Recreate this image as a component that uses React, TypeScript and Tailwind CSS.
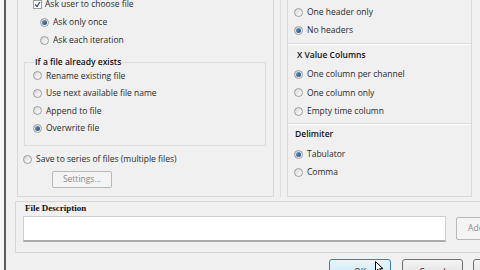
import React from "react";

function Radio({ checked }: { checked?: boolean }) {
  return (
    <span className="w-[9px] h-[9px] rounded-full border border-[#9c9c9c] bg-linear-to-br from-[#d8d8d8] to-white flex items-center justify-center shrink-0">
      {checked && <span className="w-[5px] h-[5px] rounded-full bg-linear-to-br from-[#6fa3d2] to-[#1d4673]" />}
    </span>
  );
}

function RadioRow({ label, checked, h = "h-[18px]" }: { label: string; checked?: boolean; h?: string }) {
  return (
    <div className={`flex items-center gap-[4px] ${h}`}>
      <Radio checked={checked} />
      <span className="leading-none whitespace-nowrap">{label}</span>
    </div>
  );
}

function Separator() {
  return <div className="border-t border-[#dadada] border-b border-b-white" />;
}

export default function App() {
  return (
    <div className="w-[480px] h-[270px] overflow-hidden flex bg-[#f0f0f0] text-[#2a2a2a] text-[8.5px] font-['Open_Sans','Liberation_Sans',sans-serif]">
      <div className="w-[4px] shrink-0 bg-[#f6f6f6]" />
      <div className="w-[2px] shrink-0 bg-[#5c5c5c]" />
      <div className="flex-1 min-w-0 flex flex-col">
        {/* top: output options + right column */}
        <div className="flex -mt-[5px] h-[202px] shrink-0">
          <div className="ml-[11px] w-[257px] shrink-0 border-x border-b border-[#d9d9d9] flex flex-col">
            <div className="flex items-center gap-[3px] h-[18px] pl-[15px]">
              <span className="w-[9px] h-[9px] border border-[#9c9c9c] bg-white flex items-center justify-center">
                <svg width="7" height="7" viewBox="0 0 7 7">
                  <path d="M1 3.5 L3 5.5 L6 1" fill="none" stroke="#3a4b6a" strokeWidth="1.3" />
                </svg>
              </span>
              <span className="leading-none">Ask user to choose file</span>
            </div>
            <div className="pl-[22px]">
              <RadioRow label="Ask only once" checked />
              <RadioRow label="Ask each iteration" />
            </div>

            <fieldset className="ml-[6px] mt-[7px] w-[242px] border border-[#dcdcdc] pl-[8px] pb-[8px]">
              <legend className="ml-[1px] px-[1px] h-[12px] leading-[12px] font-semibold text-[#111]">If a file already exists</legend>
              <div className="-mt-[1px]">
                <RadioRow label="Rename existing file" h="h-[17.5px]" />
                <RadioRow label="Use next available file name" h="h-[17.5px]" />
                <RadioRow label="Append to file" h="h-[17.5px]" />
                <RadioRow label="Overwrite file" checked h="h-[17.5px]" />
              </div>
            </fieldset>

            <div className="mt-[4px] pl-[5px]">
              <RadioRow label="Save to series of files (multiple files)" />
            </div>
            <button className="mt-[3px] ml-[34px] w-[60px] h-[17px] border border-[#b5b9bc] rounded-[2px] bg-[#f4f4f4] text-[#8a8a8a] leading-none">
              Settings...
            </button>
          </div>

          <div className="ml-[6px] w-[200px] shrink-0 border-l border-[#dedede] flex">
            <div className="ml-[6px] w-[185px] shrink-0 border-x border-b border-[#d9d9d9] flex flex-col">
              <div className="pt-[8px] pl-[6px]">
                <RadioRow label="One header only" />
                <RadioRow label="No headers" checked />
              </div>
              <div className="mt-[4px]">
                <Separator />
              </div>
              <div className="mt-[4px] pl-[9px] h-[12px] leading-[12px] font-semibold text-[#111]">X Value Columns</div>
              <div className="mt-[4px] pl-[6px]">
                <RadioRow label="One column per channel" checked h="h-[18.5px]" />
                <RadioRow label="One column only" h="h-[18.5px]" />
                <RadioRow label="Empty time column" h="h-[18.5px]" />
              </div>
              <div className="mt-[2px]">
                <Separator />
              </div>
              <div className="mt-[3px] pl-[7px] h-[12px] leading-[12px] font-semibold text-[#111]">Delimiter</div>
              <div className="mt-[6px] pl-[6px]">
                <RadioRow label="Tabulator" checked />
                <RadioRow label="Comma" h="h-[17px]" />
              </div>
            </div>
          </div>
        </div>

        {/* file description */}
        <div className="mt-[4px] ml-[9px] w-[500px] h-[52px] shrink-0 border border-[#d6d6d6] flex flex-col">
          <div className="pl-[9px] h-[13px] leading-[13px] font-bold text-[9px] text-[#111] font-['Liberation_Serif',serif]">File Description</div>
          <div className="flex items-start mt-[1px] pl-[7px]">
            <div className="w-[423px] h-[26px] shrink-0 bg-white border border-[#cfcfcf] border-b-2 border-b-[#ababab]" />
            <button className="ml-[10px] mt-[1px] w-[40px] h-[23px] shrink-0 border border-[#b5b9bc] rounded-[2px] bg-[#f4f4f4] text-[#8a8a8a] leading-none">
              Add
            </button>
          </div>
        </div>

        {/* dialog buttons */}
        <div className="flex mt-[6px] ml-[323px] shrink-0">
          <button className="relative w-[62px] h-[23px] shrink-0 border border-[#3c7fb1] rounded-[3px] bg-linear-to-b from-[#eaf6fd] to-[#c2e4f8] leading-none pt-[4px]">
            OK
            <svg className="absolute left-[45px] top-[1px]" width="9" height="13" viewBox="0 0 9 13">
              <path d="M0.5 0.5 L0.5 10.5 L3 8.2 L4.8 12.3 L6.4 11.6 L4.7 7.7 L8 7.7 Z" fill="white" stroke="black" strokeWidth="1" />
            </svg>
          </button>
          <button className="ml-[11px] w-[61px] h-[23px] shrink-0 border border-[#707070] rounded-[3px] bg-linear-to-b from-[#f4f4f4] to-[#dcdcdc] leading-none pt-[4px]">
            Cancel
          </button>
          <button className="ml-[10px] w-[70px] h-[23px] shrink-0 border border-[#707070] rounded-[3px] bg-linear-to-b from-[#f4f4f4] to-[#dcdcdc] leading-none pt-[4px]">
            Help
          </button>
        </div>
      </div>
    </div>
  );
}
